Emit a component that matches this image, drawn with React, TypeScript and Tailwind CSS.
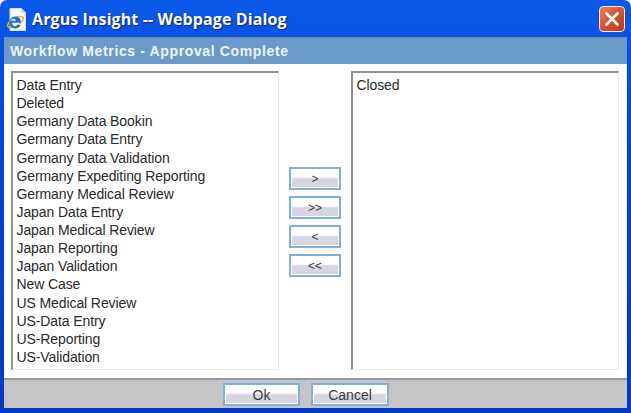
const leftItems = [
  'Data Entry',
  'Deleted',
  'Germany Data Bookin',
  'Germany Data Entry',
  'Germany Data Validation',
  'Germany Expediting Reporting',
  'Germany Medical Review',
  'Japan Data Entry',
  'Japan Medical Review',
  'Japan Reporting',
  'Japan Validation',
  'New Case',
  'US Medical Review',
  'US-Data Entry',
  'US-Reporting',
  'US-Validation',
]

function XpButton({ label, width }: { label: string; width: string }) {
  return (
    <button className={`${width} h-[23px] border-2 border-[#82aedc] bg-white p-[1px] flex`}>
      <span className="flex-1 flex items-center justify-center bg-gradient-to-b from-white from-[42%] to-[#d6d5e2] to-[52%] text-[#3c3c3c] leading-none">
        {label}
      </span>
    </button>
  )
}

function ListBox({ items }: { items: string[] }) {
  return (
    <div className="w-[268px] h-[299px] border-l-2 border-t-2 border-l-[#8f8f8c] border-t-[#8f8f8c] border-r border-b border-r-[#ecebdc] border-b-[#ecebdc] bg-white pl-[3.5px] pt-[3px] text-[14px] tracking-[-0.1px] text-[#2a2a2a]">
      {items.map((item) => (
        <div key={item} className="h-[18.13px] leading-[18px] whitespace-nowrap">
          {item}
        </div>
      ))}
    </div>
  )
}

export default function App() {
  return (
    <div className="w-[631px] h-[413px] bg-white overflow-hidden font-['Liberation_Sans',Arial,sans-serif]">
      <div className="w-full h-full flex flex-col rounded-t-[7px] bg-gradient-to-b from-[#0a58e8] from-[1%] via-[#0044dc] via-[30%] to-[#0438c4] px-[4px] pb-[5px]">
        {/* Title bar */}
        <div className="h-[37px] shrink-0 flex items-center pl-[2px] pr-[2px]">
          <svg width="22" height="26" viewBox="0 0 22 26" className="shrink-0">
            <path d="M4 2.5h11.5l4 4v18H4z" fill="#f7f8fc" stroke="#d8deea" strokeWidth="1" />
            <path d="M15.5 2.5v4h4z" fill="#b9c7e4" />
            <ellipse cx="9.5" cy="16" rx="9" ry="3.8" fill="none" stroke="#eab52f" strokeWidth="1.5" transform="rotate(-30 9.5 16)" />
            <path
              d="M4 16.8h11c0-4-2.5-6.4-5.7-6.4-3.5 0-6 2.8-6 6.2 0 3.5 2.5 5.9 6 5.9 2.6 0 4.5-1.2 5.4-3.4h-3c-.6.9-1.4 1.3-2.4 1.3-1.7 0-2.8-1.1-3-2.6v-1zm.1-2c.2-1.4 1.3-2.4 2.9-2.4s2.7 1 2.8 2.4z"
              fill="#1b6fd6"
              fillRule="evenodd"
            />
          </svg>
          <span className="ml-[4px] font-['Open_Sans',sans-serif] font-bold text-[16px] text-white tracking-[0.1px] [text-shadow:1px_1px_1px_#0a2a80] whitespace-nowrap">
            Argus Insight -- Webpage Dialog
          </span>
          <div className="ml-auto w-[26px] h-[26px] rounded-[4px] border border-[#f1ece6] bg-gradient-to-br from-[#e8815f] via-[#d9512c] to-[#c23a10] flex items-center justify-center">
            <svg width="16" height="16" viewBox="0 0 16 16">
              <path d="M2.5 2.5l11 11M13.5 2.5l-11 11" stroke="#fff" strokeWidth="2.6" strokeLinecap="round" />
            </svg>
          </div>
        </div>

        {/* Dialog body */}
        <div className="flex-1 flex flex-col min-h-0 border-t border-[#7d8a9c]">
          <div className="h-[26px] shrink-0 bg-[#6c9ac8] flex items-center pl-[6px] text-[14px] font-bold text-[#eef4fa] tracking-[0.63px] whitespace-nowrap">
            Workflow Metrics - Approval Complete
          </div>

          <div className="flex-1 min-h-0 bg-white border-r border-r-[#eeeeee] flex pl-[7px] pt-[7px]">
            <ListBox items={leftItems} />
            <div className="w-[72px] shrink-0 h-[299px] flex flex-col items-center pt-[96px] gap-[6px] text-[12px]">
              <XpButton label=">" width="w-[52px]" />
              <XpButton label=">>" width="w-[52px]" />
              <XpButton label="<" width="w-[52px]" />
              <XpButton label="<<" width="w-[52px]" />
            </div>
            <ListBox items={['Closed']} />
          </div>

          <div className="h-[30px] shrink-0 bg-[#c5c5c7] border-t-2 border-t-[#9a9a9a] flex items-start pl-[219px] pt-[3px] gap-[11px] text-[14px]">
            <XpButton label="Ok" width="w-[77px]" />
            <XpButton label="Cancel" width="w-[78px]" />
          </div>
        </div>
      </div>
    </div>
  )
}
